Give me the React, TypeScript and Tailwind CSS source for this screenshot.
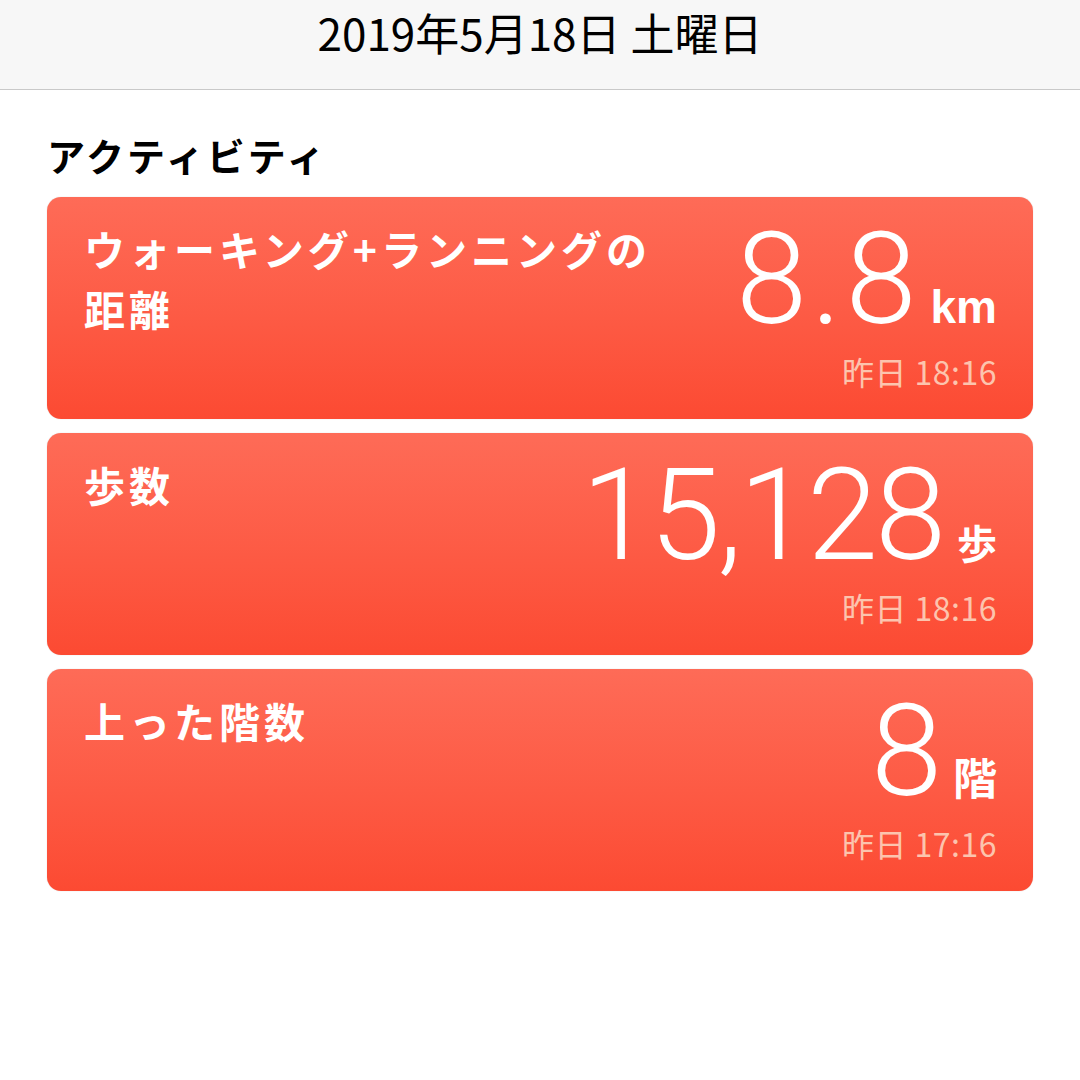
const JP = "font-['Noto_Sans_CJK_JP','Noto_Sans',sans-serif]";

type Metric = {
  label: React.ReactNode;
  value: string;
  valueClass: string;
  unit: string;
  unitClass: string;
  time: string;
};

const metrics: Metric[] = [
  {
    label: (
      <>
        ウォーキング+ランニングの
        <br />
        距離
      </>
    ),
    value: "8.8",
    valueClass: "tracking-[4px]",
    unit: "km",
    unitClass: "font-['Liberation_Sans',sans-serif] text-[46px] ml-[10px]",
    time: "昨日 18:16",
  },
  {
    label: "歩数",
    value: "15,128",
    valueClass: "tracking-[-3px]",
    unit: "歩",
    unitClass: `${JP} text-[40px] ml-[14px]`,
    time: "昨日 18:16",
  },
  {
    label: "上った階数",
    value: "8",
    valueClass: "tracking-[-3px]",
    unit: "階",
    unitClass: `${JP} text-[44px] ml-[14px]`,
    time: "昨日 17:16",
  },
];

function MetricCard({ m }: { m: Metric }) {
  return (
    <div className="flex h-[222px] justify-between rounded-[14px] bg-gradient-to-b from-[#fe6b57] to-[#fc4a32] pl-[37px] pr-[36px] pt-[18px] text-white shadow-[0_0_1px_rgba(0,0,0,0.25)]">
      <div className={`${JP} mt-[3px] text-[41px] font-bold leading-[60px] tracking-[4px]`}>{m.label}</div>
      <div className="flex flex-col items-end">
        <div className="flex items-baseline">
          <span className={`font-['Roboto',sans-serif] text-[128px] font-light leading-none ${m.valueClass}`}>
            {m.value}
          </span>
          <span className={`${m.unitClass} font-bold leading-none`}>{m.unit}</span>
        </div>
        <div className={`${JP} mt-[8px] text-[32px] leading-[40px] tracking-[0.5px] text-[#fcc4ae]`}>{m.time}</div>
      </div>
    </div>
  );
}

export default function App() {
  return (
    <main className="min-h-[1080px] w-[1080px] bg-white">
      {/* Date bar */}
      <header className="flex h-[90px] items-center justify-center border-b border-[#c9c9c9] bg-[#f7f7f7] pb-[26px]">
        <h1 className={`${JP} text-[44px] font-normal leading-none text-black`}>2019年5月18日 土曜日</h1>
      </header>

      <section className="px-[47px]">
        <h2 className={`${JP} mt-[41px] text-[38px] font-bold leading-[48px] tracking-[3px] text-black`}>
          アクティビティ
        </h2>
        <div className="mt-[18px] flex flex-col gap-[14px]">
          {metrics.map((m, i) => (
            <MetricCard key={i} m={m} />
          ))}
        </div>
      </section>
    </main>
  );
}
